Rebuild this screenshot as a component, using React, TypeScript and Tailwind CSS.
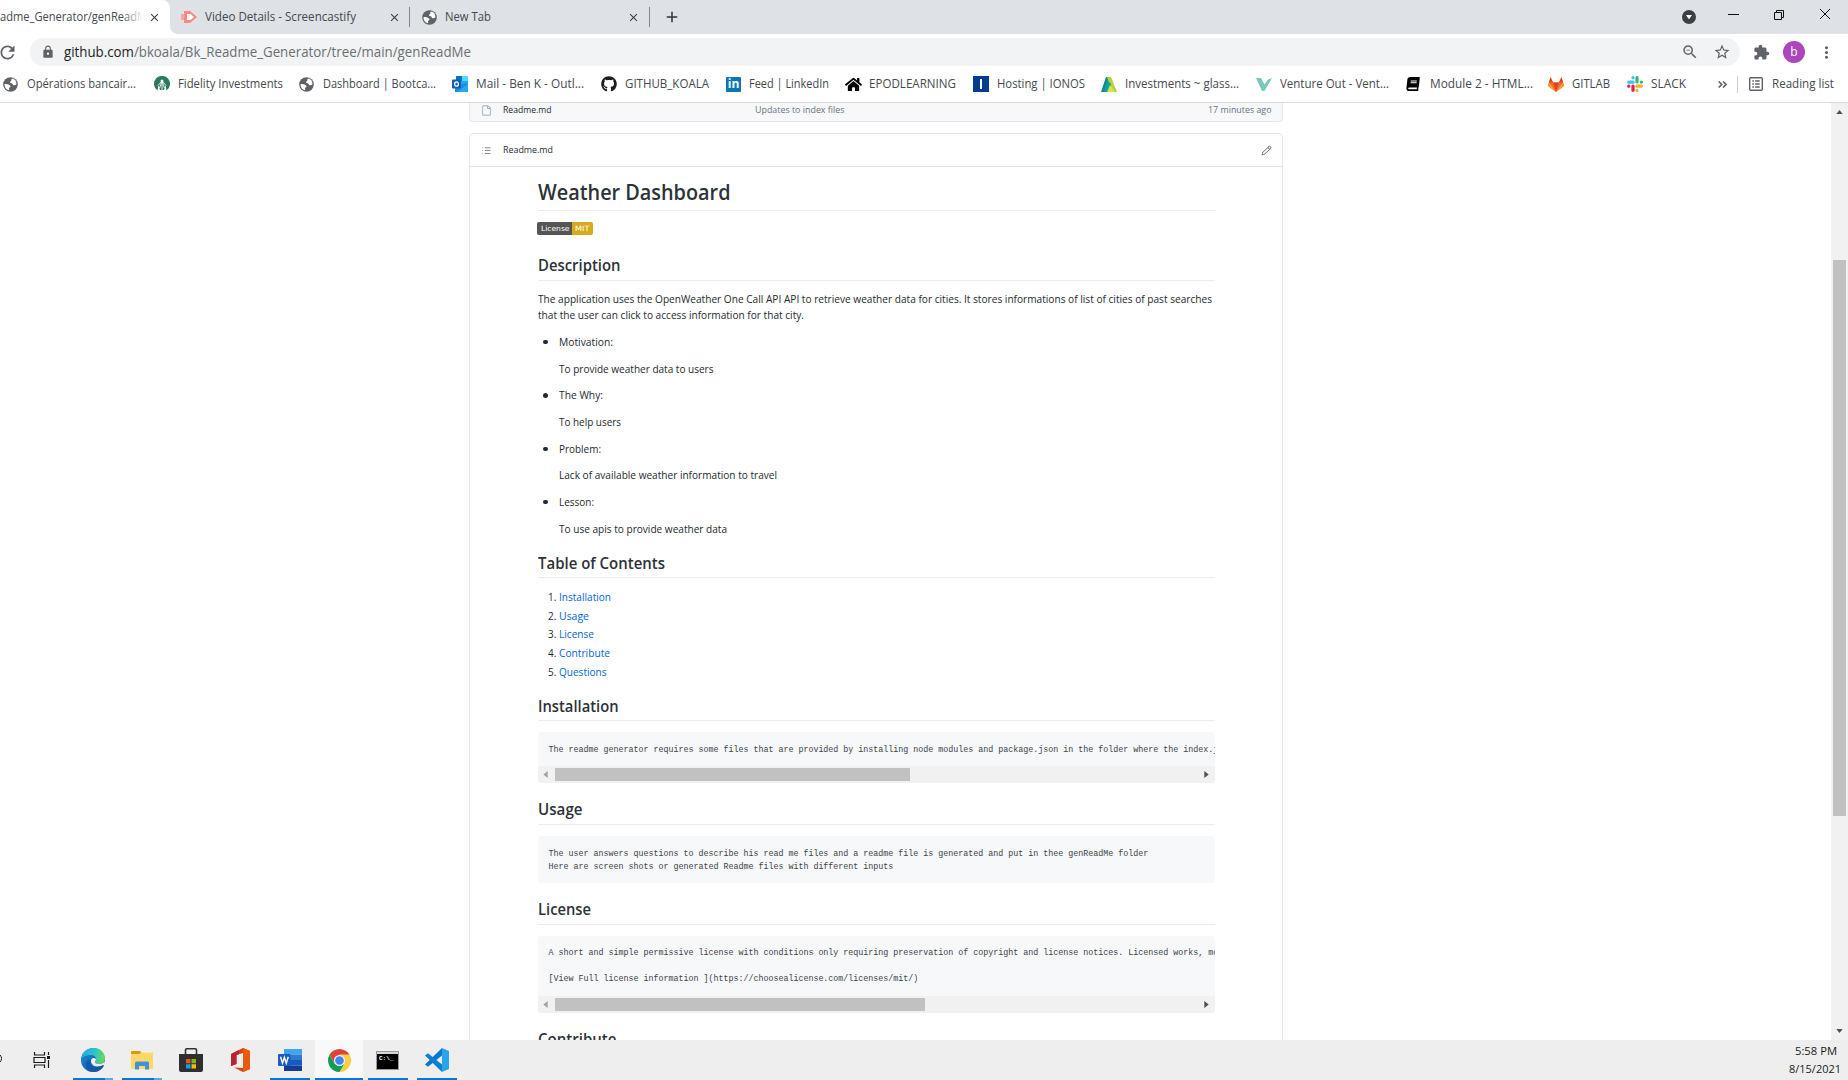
import { useLayoutEffect, useRef, type ReactNode } from "react";
import { FaGithub, FaHome, FaBook } from "react-icons/fa";
import {
  MdLock,
  MdRefresh,
  MdStarBorder,
  MdExtension,
  MdMoreVert,
  MdZoomOut,
  MdClose,
  MdAdd,
} from "react-icons/md";
import { GoFile, GoListUnordered, GoPencil } from "react-icons/go";

/* Single line of text condensed or widened to an exact width. */
function Fit({ w, children, className = "" }: { w: number; children: ReactNode; className?: string }) {
  const ref = useRef<HTMLSpanElement>(null);
  useLayoutEffect(() => {
    const el = ref.current;
    if (!el) return;
    el.style.transform = "none";
    const natural = el.getBoundingClientRect().width;
    if (natural) el.style.transform = `scaleX(${w / natural})`;
  }, [w]);
  return (
    <span className={`block shrink-0 ${className}`} style={{ width: w }}>
      <span ref={ref} className="inline-block origin-left whitespace-nowrap align-top">
        {children}
      </span>
    </span>
  );
}

/* ---------- small logos ---------- */

const Globe = () => (
  <svg viewBox="0 0 16 16" className="size-[15px]">
    <circle cx="8" cy="8" r="7.800" fill="#5f6368" />
    <path d="M10.500 1.700C9 2 8.500 3 8.800 4.200 7 4.500 7 6 8.300 6.400c1.400.3 2 .8 2.400 2 1 .8 2.500.4 3.600-.4A6.300 6.300 0 0 0 10.500 1.700z" fill="#fff" />
    <path d="M1.700 7.500c1.800 0 4.500.2 6 1.700.8 1-.2 1.800-1.200 2-.3 1.300.2 2.200 0 3A6.300 6.300 0 0 1 1.700 7.500z" fill="#fff" />
  </svg>
);

const Screencastify = () => (
  <svg viewBox="0 0 16 12" className="h-[12px] w-[16px]">
    <path d="M3 0h6l7 6-7 6H3z" fill="#ff8784" />
    <path d="M6 3h3.500L13 6 9.500 9H6z" fill="#fff" />
    <path d="M0 3h3v6H0z" fill="#ffa3a0" />
  </svg>
);

const Fidelity = () => (
  <svg viewBox="0 0 16 16" className="size-[16px]">
    <path d="M3.500 14.500A8 8 0 1 1 12.500 14.500L11.500 9 10 14H6L4.500 9z" fill="#2b7b5a" />
    <path d="M8 5l-4 4.500M8 5l4 4.500M8 5v10M8 5L5.500 12M8 5l2.500 7" stroke="#fff" strokeWidth=".9" />
    <circle cx="8" cy="5" r="1.500" fill="#fff" />
  </svg>
);

const Outlook = () => (
  <svg viewBox="0 0 16 16" className="size-[16px]">
    <path d="M4 0h12v10H4z" fill="#28a8ea" />
    <path d="M10 0h6v5h-6z" fill="#50d9ff" />
    <path d="M4 0h6v5H4z" fill="#0a72c4" />
    <path d="M3 9l13-2v9H3z" fill="#1490df" />
    <path d="M16 8v8H5z" fill="#28a8ea" />
    <rect y="3.500" width="9" height="9" rx=".8" fill="#0f5fb5" />
    <ellipse cx="4.500" cy="8" rx="1.900" ry="2.200" fill="none" stroke="#fff" strokeWidth="1.300" />
  </svg>
);

const LinkedIn = () => (
  <span className="flex size-[15px] items-center justify-center rounded-[1px] bg-[#0a77b5] font-['Open_Sans'] text-[12px] leading-none font-bold text-white">
    in
  </span>
);

const Ionos = () => (
  <span className="flex size-[16px] items-center justify-center bg-[#003d8f]">
    <span className="h-[10px] w-[2px] bg-white" />
  </span>
);

const Glass = () => (
  <svg viewBox="0 0 16 15" className="h-[15px] w-[16px]">
    <path d="M5 0h4l-3 15H0z" fill="#0b8a8f" />
    <path d="M6 0h4l6 15h-5z" fill="#b5d334" />
    <path d="M6 3l4 4-1 8H3z" fill="#15a0a0" />
    <path d="M9 8l5 7H6z" fill="#d5e05a" />
  </svg>
);

const Venture = () => (
  <svg viewBox="0 0 16 13" className="h-[13px] w-[16px]">
    <path d="M0 0h5l3.500 6.500L12 1.500 16 0 8.500 13H6z" fill="#79c9bb" />
  </svg>
);

const Gitlab = () => (
  <svg viewBox="0 0 16 15" className="h-[15px] w-[16px]">
    <path d="M8 15L.2 9.200 0 8l2.500-8L5 5.500h6L13.500 0 16 8l-.2 1.200z" fill="#fc6d26" />
    <path d="M8 15L5 5.500h6z" fill="#e24329" />
    <path d="M2.500 0L5 5.500H1zM13.500 0L11 5.500h4z" fill="#e24329" />
    <path d="M1 5.500L0 8.500 8 15zM15 5.500l1 3L8 15z" fill="#fca326" />
  </svg>
);

const Slack = () => (
  <svg viewBox="0 0 16 16" className="size-[16px]" strokeWidth="3.200" strokeLinecap="round">
    <path d="M1.700 6.200h4.200" stroke="#36c5f0" />
    <path d="M6 1.600v.2" stroke="#36c5f0" />
    <path d="M10 1.700v4.300" stroke="#2eb67d" />
    <path d="M14.300 6.100h.1" stroke="#2eb67d" />
    <path d="M14.300 10.200H10" stroke="#ecb22e" />
    <path d="M10 14.300v.1" stroke="#ecb22e" />
    <path d="M6 14.300v-4.200" stroke="#e01e5a" />
    <path d="M1.700 10.200h.1" stroke="#e01e5a" />
  </svg>
);

const ReadingList = () => (
  <svg viewBox="0 0 15 15" className="size-[14px]" fill="none" stroke="#5f6368" strokeWidth="1.500">
    <rect x=".75" y=".75" width="13.500" height="13.500" rx="1" />
    <path d="M3.500 4.300h1.700M6.500 4.300h5M3.500 7.500h1.700M6.500 7.500h5M3.500 10.700h1.700M6.500 10.700h5" />
  </svg>
);

/* ---------- browser chrome ---------- */

function TabStrip() {
  return (
    <div className="flex h-[34px] items-center bg-white text-[12.500px] text-[#45494d]">
      <div className="flex h-full w-[170px] shrink-0 items-center bg-[#dee1e6]">
        <div className="flex h-full w-full items-center overflow-hidden rounded-tr-[8px] bg-white">
          <div className="relative flex w-[148px] items-center overflow-hidden">
            <Fit w={147}>adme_Generator/genReadM</Fit>
            <span className="absolute right-0 h-full w-[26px] bg-gradient-to-r from-transparent to-white to-80%" />
          </div>
          <MdClose className="size-[13px] text-[#3c4043]" />
        </div>
      </div>
      <div className="flex h-full flex-1 items-center rounded-bl-[8px] bg-[#dee1e6]">
        <div className="ml-[11px] flex w-[228px] items-center">
          <Screencastify />
          <Fit w={151} className="ml-[8px]">Video Details - Screencastify</Fit>
          <MdClose className="ml-[31.500px] size-[13px] text-[#3c4043]" />
        </div>
        <span className="h-[20px] w-px bg-[#85888c]" />
        <div className="ml-[12px] flex w-[227px] items-center">
          <Globe />
          <Fit w={46} className="ml-[8px]">New Tab</Fit>
          <MdClose className="mr-[9px] ml-auto size-[13px] text-[#3c4043]" />
        </div>
        <span className="h-[20px] w-px bg-[#85888c]" />
        <MdAdd className="ml-[13px] size-[18px] text-[#303336]" />
        <div className="ml-auto flex items-center">
          <span className="flex size-[14px] items-center justify-center rounded-full bg-[#3c4043]">
            <svg viewBox="0 0 8 6" className="w-[6px]"><path d="M0 0h8L4 6z" fill="#fff" /></svg>
          </span>
          <svg viewBox="0 0 102 14" className="mr-[18px] mb-[6px] ml-[32px] h-[14px] w-[102px]" fill="none" stroke="#111">
            <path d="M0 7.500h11M46.500 5.500h7v7h-7zM48.500 5.500v-2h7v7h-2M92 2l10 10M102 2L92 12" />
          </svg>
        </div>
      </div>
    </div>
  );
}

function AddressBar() {
  return (
    <div className="flex h-[36px] items-center text-[#5f6368]">
      <MdRefresh className="-ml-[3px] size-[21px] shrink-0" />
      <div className="ml-[12px] flex h-[28px] w-[1710px] items-center rounded-full bg-[#f1f3f4]">
        <MdLock className="ml-[11px] size-[14px]" />
        <Fit w={407} className="mb-px ml-[9px] text-[14px] text-[#6b6f73]">
          <span className="text-[#202124]">github.com</span>/bkoala/Bk_Readme_Generator/tree/main/genReadMe
        </Fit>
        <MdZoomOut className="ml-auto size-[18px]" />
        <MdStarBorder className="mr-[9px] ml-[14px] size-[18px]" />
      </div>
      <MdExtension className="ml-[13px] size-[17px]" />
      <span className="ml-[13px] flex size-[22px] items-center justify-center rounded-full bg-[#ab47bc] text-[12px] leading-none text-white">
        b
      </span>
      <MdMoreVert className="ml-[12px] size-[19px]" />
    </div>
  );
}

const bookmarks: { icon: ReactNode; label: string; w: number; gap: number; cell: number }[] = [
  { icon: <Globe />, label: "Opérations bancair...", w: 109, gap: 24, cell: 151 },
  { icon: <Fidelity />, label: "Fidelity Investments", w: 105, gap: 23.5, cell: 145 },
  { icon: <Globe />, label: "Dashboard | Bootca...", w: 113, gap: 24, cell: 153 },
  { icon: <Outlook />, label: "Mail - Ben K - Outl...", w: 108, gap: 24, cell: 148.5 },
  { icon: <FaGithub className="size-[16px] text-[#1b1f23]" />, label: "GITHUB_KOALA", w: 84, gap: 24, cell: 125.5 },
  { icon: <LinkedIn />, label: "Feed | LinkedIn", w: 80, gap: 23, cell: 119 },
  { icon: <FaHome className="size-[17px] text-black" />, label: "EPODLEARNING", w: 87, gap: 24, cell: 128 },
  { icon: <Ionos />, label: "Hosting | IONOS", w: 88, gap: 24, cell: 128 },
  { icon: <Glass />, label: "Investments ~ glass...", w: 114, gap: 24, cell: 155 },
  { icon: <Venture />, label: "Venture Out - Vent...", w: 109, gap: 24, cell: 150 },
  { icon: <FaBook className="size-[14px] -skew-x-6 text-black" />, label: "Module 2 - HTML...", w: 103, gap: 24, cell: 142 },
  { icon: <Gitlab />, label: "GITLAB", w: 38, gap: 24, cell: 79 },
  { icon: <Slack />, label: "SLACK", w: 35, gap: 24, cell: 88 },
];

function BookmarksBar() {
  return (
    <div className="flex h-[33px] items-center border-b border-[#dadce0] pb-[4px] pl-[3px] text-[12.500px] text-[#45494d]">
      {bookmarks.map((b) => (
        <div key={b.label} className="flex shrink-0 items-center" style={{ width: b.cell }}>
          <span className="flex shrink-0 items-center" style={{ width: b.gap }}>{b.icon}</span>
          <Fit w={b.w}>{b.label}</Fit>
        </div>
      ))}
      <svg viewBox="0 0 9 7" className="ml-[3px] h-[7px] w-[9px] shrink-0" fill="none" stroke="#5f6368" strokeWidth="1.600">
        <path d="M.7.500l3 3-3 3M5 .500l3 3-3 3" />
      </svg>
      <span className="mr-[11px] ml-[10px] h-[17px] w-px bg-[#ccced2]" />
      <ReadingList />
      <Fit w={62} className="ml-[9px]">Reading list</Fit>
    </div>
  );
}

/* ---------- readme ---------- */

function H2({ w, children, className = "" }: { w: number; children: ReactNode; className?: string }) {
  return (
    <h2 className={`h-[26px] border-b border-[#eaecef] text-[15.800px] leading-[20px] font-semibold text-[#2d3238] ${className}`}>
      <Fit w={w}>{children}</Fit>
    </h2>
  );
}

function CodeBlock({ lines, thumb, pad = "pt-[12px] pb-[9px]" }: { lines: string[]; thumb?: number; pad?: string }) {
  return (
    <div className="mt-[11px] overflow-hidden rounded-t-[4px] rounded-b-[3px] bg-[#f6f8fa]">
      <pre className={`overflow-hidden pl-[10.500px] font-['Liberation_Mono',monospace] text-[8.330px] leading-[13px] text-[#3d4248] ${pad}`}>
        {lines.join("\n")}
      </pre>
      {thumb && (
        <div className="flex h-[17px] items-center bg-[#f1f1f1] pr-[6px] pl-[5px]">
          <svg viewBox="0 0 5 8" className="h-[7px] w-[5px]"><path d="M5 0v8L0 4z" fill="#a3a3a3" /></svg>
          <span className="ml-[7px] h-[13px] bg-[#c1c1c1]" style={{ width: thumb }} />
          <svg viewBox="0 0 5 8" className="ml-auto h-[7px] w-[5px]"><path d="M0 0v8l5-4z" fill="#505050" /></svg>
        </div>
      )}
    </div>
  );
}

const notes: [string, number, boolean][] = [
  ["Motivation:", 54, true],
  ["To provide weather data to users", 154.5, false],
  ["The Why:", 44, true],
  ["To help users", 62, false],
  ["Problem:", 42, true],
  ["Lack of available weather information to travel", 218, false],
  ["Lesson:", 35, true],
  ["To use apis to provide weather data", 168, false],
];

const contents: [string, number][] = [
  ["Installation", 52],
  ["Usage", 30],
  ["License", 35],
  ["Contribute", 51],
  ["Questions", 47.5],
];

function Readme() {
  return (
    <div className="w-[814px] shrink-0 text-[#24292e]">
      <div className="flex h-[19px] items-center rounded-b-[4px] border border-t-0 border-[#e1e4e8] bg-[#f6f8fa] pr-[11px] pb-[4px] pl-[11px] text-[9.300px] leading-[14px]">
        <GoFile className="size-[11px] text-[#8b949e]" />
        <Fit w={48.5} className="ml-[11px]">Readme.md</Fit>
        <Fit w={89.5} className="ml-[203px] text-[#6a737d]">Updates to index files</Fit>
        <Fit w={63.5} className="ml-auto text-[#6a737d]">17 minutes ago</Fit>
      </div>
      <div className="mt-[11px] h-[960px] rounded-t-[4px] border border-[#e1e4e8]">
        <div className="flex h-[33px] items-center border-b border-[#e1e4e8] pr-[10px] pl-[11px]">
          <GoListUnordered className="size-[11px] text-[#586069]" />
          <Fit w={50} className="ml-[11px] text-[9.300px] font-medium">Readme.md</Fit>
          <GoPencil className="ml-auto size-[11px] text-[#586069]" />
        </div>
        <article className="ml-[68px] w-[677px]">
          <h1 className="h-[44px] border-b border-[#eaecef] pt-[13px] text-[21.400px] leading-[24px] font-semibold text-[#2d3238]">
            <Fit w={192.5}>Weather Dashboard</Fit>
          </h1>
          <div className="mt-[11px] -ml-px flex h-[13px] w-[56px] overflow-hidden rounded-[2px] font-['DejaVu_Sans'] text-[7.200px] leading-[13px] text-white">
            <span className="w-[34.500px] bg-[#555] pl-[4px]"><Fit w={28.5}>License</Fit></span>
            <span className="flex-1 bg-[#d6ab1b] pl-[3px]"><Fit w={14.5}>MIT</Fit></span>
          </div>
          <H2 w={82.5} className="mt-[20px]">Description</H2>
          <p className="mt-[10px] text-[10.700px] leading-[16px]">
            <Fit w={674}>
              The application uses the OpenWeather One Call API API to retrieve weather data for cities. It stores informations of list of cities of past searches
            </Fit>
            <Fit w={266}>that the user can click to access information for that city.</Fit>
          </p>
          <ul className="mt-[11px] flex h-[203px] flex-col gap-[10.700px] text-[10.700px] leading-[16px]">
            {notes.map(([t, w, dot]) => (
              <li key={t} className="flex h-[16px] shrink-0 items-center">
                <span className="flex w-[21.300px] pl-[5px]">{dot && <span className="size-[4.500px] rounded-full bg-[#24292e]" />}</span>
                <Fit w={w}>{t}</Fit>
              </li>
            ))}
          </ul>
          <H2 w={127} className="mt-[15px] pt-px">Table of Contents</H2>
          <ol className="mt-[9.700px] h-[94.300px] text-[10.700px]">
            {contents.map(([t, w], i) => (
              <li key={t} className="flex h-[18.650px] items-center pl-[10px]">
                <Fit w={8.3} className="mr-[3px]">{i + 1}.</Fit>
                <Fit w={w} className="text-[#0366d6]">{t}</Fit>
              </li>
            ))}
          </ol>
          <H2 w={80.5} className="mt-[13px] pt-px">Installation</H2>
          <CodeBlock
            thumb={355}
            lines={["The readme generator requires some files that are provided by installing node modules and package.json in the folder where the index.js"]}
          />
          <H2 w={44.5} className="mt-[16px]">Usage</H2>
          <CodeBlock
            lines={[
              "The user answers questions to describe his read me files and a readme file is generated and put in thee genReadMe folder",
              "Here are screen shots or generated Readme files with different inputs",
            ]}
          />
          <H2 w={53} className="mt-[16px]">License</H2>
          <CodeBlock
            thumb={370}
            pad="pt-[11px] pb-[10px]"
            lines={[
              "A short and simple permissive license with conditions only requiring preservation of copyright and license notices. Licensed works, modifications",
              "",
              "[View Full license information ](https://choosealicense.com/licenses/mit/)",
            ]}
          />
          <H2 w={78.5} className="mt-[16px]">Contribute</H2>
        </article>
      </div>
    </div>
  );
}

function PageScrollbar() {
  return (
    <div className="ml-auto flex h-full w-[17px] flex-col items-center bg-[#f1f1f1]">
      <svg viewBox="0 0 8 5" className="mt-[7px] h-[4px] w-[7px]"><path d="M0 5h8L4 0z" fill="#505050" /></svg>
      <span className="mt-[146px] h-[556px] w-[13px] bg-[#c1c1c1]" />
      <svg viewBox="0 0 8 5" className="mt-auto mb-[7px] h-[4px] w-[7px]"><path d="M0 0h8L4 5z" fill="#505050" /></svg>
    </div>
  );
}

/* ---------- taskbar ---------- */

const TaskView = () => (
  <svg viewBox="0 0 18 16" className="h-[16px] w-[18px]" fill="none" stroke="#1a1a1a" strokeWidth="1.200">
    <path d="M1.500 0v3h10V0M1.500 16v-3h10v3M1 5.500h11v5H1zM15.500 0v3M15.500 8v8" />
    <path d="M14 4h3v3h-3z" fill="#1a1a1a" stroke="none" />
  </svg>
);

const Edge = () => (
  <svg viewBox="0 0 24 24" className="size-[24px]">
    <defs>
      <linearGradient id="edgeTop" x1="0" x2="1" y1=".4" y2=".5">
        <stop offset="0" stopColor="#2aa9e8" />
        <stop offset=".55" stopColor="#2fc2c9" />
        <stop offset="1" stopColor="#6bdc55" />
      </linearGradient>
      <linearGradient id="edgeLow" x1="0" x2="1" y1="0" y2="1">
        <stop offset="0" stopColor="#1b8fdb" />
        <stop offset="1" stopColor="#0c4a9c" />
      </linearGradient>
    </defs>
    <circle cx="12" cy="12" r="12" fill="url(#edgeLow)" />
    <path d="M.3 10C2 3.500 7 0 12.500 0 19.500 0 24 5 24 10.500c0 3.500-2.700 5.500-6 5.500-2.700 0-4-1-4-2s1-1.300 1-3c0-2.500-2.400-4-5.500-4C5.500 7 2 8.500.3 10z" fill="url(#edgeTop)" />
    <path d="M9.500 12c-1.300 4.500 2 8 6.500 8 3 0 5-1 6.500-2 .5 0 0 .5-.3 1C21 20.700 18 24 12.500 24 8 24 5 20.500 5 16.500c0-3 2-5.500 4.500-4.500z" fill="#135ba8" />
    <path d="M10.300 11.500c-1.300 3.500 1.700 7 6 7 2.500 0 4.500-.8 5.700-1.500l1.500 0 .5-4c-1.500 2.500-4 3-6 3-2.700 0-4-1-4-2s1-1.300 1-3c-1.500-1.500-3.800-1.200-4.700.5z" fill="#eee" />
  </svg>
);

const Folder = () => (
  <svg viewBox="0 0 22 19" className="h-[19px] w-[22px]">
    <path d="M0 1q0-1 1-1h8l1.500 2v2H0z" fill="#d99b0b" />
    <path d="M0 3h8l2-1.500h12V18H0z" fill="#ffd869" />
    <path d="M4 18.500V12q0-1.500 1.500-1.500h11Q18 10.500 18 12v6.500h-4V15H8v3.500z" fill="#3b93d9" />
  </svg>
);

const Store = () => (
  <svg viewBox="0 0 24 24" className="size-[24px]">
    <path d="M6.500 7V2q0-1.200 1.200-1.200h8.600q1.200 0 1.200 1.200v5" fill="none" stroke="#333" strokeWidth="1.600" />
    <path d="M0 6h24v16q0 2-2 2H2q-2 0-2-2z" fill="#2f2f2f" />
    <path d="M7 11h4.500v4.300H7z" fill="#f25022" />
    <path d="M12.500 11H17v4.300h-4.500z" fill="#7fba00" />
    <path d="M7 16.200h4.500v4.300H7z" fill="#00a4ef" />
    <path d="M12.500 16.200H17v4.300h-4.500z" fill="#ffb900" />
  </svg>
);

const Office = () => (
  <svg viewBox="0 0 19 24" className="h-[24px] w-[19px]">
    <path d="M0 6L12 0l7 3v18l-7 3-9-4.500L12 20V5L5.500 7v9L0 18z" fill="#dc3e15" />
    <path d="M12 0l7 3v18l-7 3z" fill="#ea5a0b" />
    <path d="M0 6L8 2v4.200L5.500 7v9L0 18z" fill="#b8233a" />
  </svg>
);

const Word = () => (
  <svg viewBox="0 0 24 22" className="h-[22px] w-[24px]">
    <path d="M6 0h18v5.500H6z" fill="#41a5ee" />
    <path d="M6 5.500h18V11H6z" fill="#2b7cd3" />
    <path d="M6 11h18v5.500H6z" fill="#185abd" />
    <path d="M6 16.500h18V22H6z" fill="#103f91" />
    <rect y="5" width="12.500" height="12" rx="1" fill="#1b5cbe" />
    <path d="M2.500 7.800l2 6.400 1.900-6 1.900 6 2-6.400" fill="none" stroke="#fff" strokeWidth="1.400" />
  </svg>
);

const Chrome = () => (
  <svg viewBox="0 0 24 24" className="size-[23px]">
    <path d="M1.610 6A12 12 0 0 1 22.390 6H12L6.800 15z" fill="#db4437" />
    <path d="M22.390 6A12 12 0 0 1 12 24l5.200-9L12 6z" fill="#ffcd40" />
    <path d="M12 24A12 12 0 0 1 1.610 6L6.800 15 12 18l5.200-3z" fill="#0f9d58" />
    <circle cx="12" cy="12" r="5.800" fill="#f1f1f1" />
    <circle cx="12" cy="12" r="4.500" fill="#4285f4" />
  </svg>
);

const Cmd = () => (
  <span className="mr-px flex h-[19px] w-[23px] flex-col border border-[#999] bg-black">
    <span className="h-[2px] bg-[#d5d5d5]" />
    <span className="pl-[2px] font-['Liberation_Mono'] text-[6px] leading-[9px] font-bold text-white">C:\_</span>
  </span>
);

const VSCode = () => (
  <svg viewBox="0 0 24 24" className="size-[24px]">
    <path d="M0 16.500L17 0v7.500L3 18.700z" fill="#0a77c8" />
    <path d="M0 7.500L3 5.300 17 16.500V24z" fill="#0e80cf" />
    <path d="M17 0l7 3v18l-7 3V0z" fill="#27a6ee" />
  </svg>
);

const apps: { icon: ReactNode; ml: number; w: number; tail?: boolean; line: boolean; active?: boolean }[] = [
  { icon: <TaskView />, ml: 20, w: 40, line: false },
  { icon: <Edge />, ml: 11, w: 40, line: true, tail: true },
  { icon: <Folder />, ml: 9, w: 40, line: true, tail: true },
  { icon: <Store />, ml: 9, w: 40, line: false },
  { icon: <Office />, ml: 9, w: 40, line: false },
  { icon: <Word />, ml: 10, w: 40, line: true },
  { icon: <Chrome />, ml: 5, w: 48, line: true, active: true },
  { icon: <Cmd />, ml: 5, w: 40, line: true },
  { icon: <VSCode />, ml: 9, w: 40, line: true },
];

function Taskbar() {
  return (
    <div className="flex h-[40px] bg-[#eee]">
      <span className="w-[2px] overflow-hidden">
        <span className="mt-[13px] -ml-[9px] block size-[11px] rounded-full border-[1.5px] border-[#1a1a1a]" />
      </span>
      {apps.map((a, i) => (
        <div
          key={i}
          className={`flex h-full shrink-0 flex-col ${a.active ? "bg-[#f9f9f9]" : ""}`}
          style={{ width: a.w, marginLeft: a.ml }}
        >
          <span className="flex h-[38px] items-center justify-center pt-[2px]">{a.icon}</span>
          {a.line && (
            <span className="flex h-[2px] bg-[#0078d7]">
              {a.tail && <span className="ml-auto w-[8px] bg-[#5fa8e2]" />}
            </span>
          )}
        </div>
      ))}
      <div className="mr-[7px] ml-auto flex flex-col items-end pt-[2px] text-[11.500px] leading-[18px] text-[#1a1a1a]">
        <Fit w={42} className="mr-[4px]">5:58 PM</Fit>
        <Fit w={52}>8/15/2021</Fit>
      </div>
    </div>
  );
}

export default function App() {
  return (
    <div className="flex h-[1080px] w-[1848px] flex-col overflow-hidden bg-white font-['Open_Sans','Noto_Sans',sans-serif]">
      <TabStrip />
      <AddressBar />
      <BookmarksBar />
      <main className="flex h-[937px] items-start overflow-hidden pl-[469px]">
        <Readme />
        <PageScrollbar />
      </main>
      <Taskbar />
    </div>
  );
}
